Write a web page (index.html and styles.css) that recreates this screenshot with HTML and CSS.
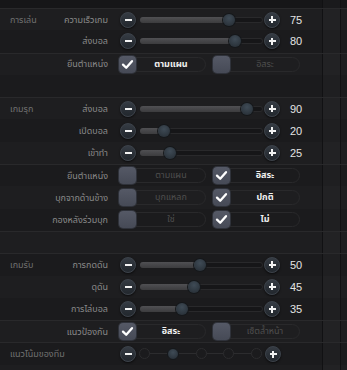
FILE: index.html
```html
<!DOCTYPE html>
<html lang="th">

<head>
    <meta charset="UTF-8">
    <meta name="viewport" content="width=device-width, initial-scale=1.0">
    <title>Tactics</title>
    <link rel="stylesheet" href="styles.css">
</head>

<body>
    <div class="panel">
        <div class="row top"><div class="main"></div><div class="side"></div><div class="edge"></div></div>

        <!-- การเล่น -->
        <div class="row line">
            <div class="main">
                <div class="head"><span class="sec">การเล่น</span><span class="name">ความเร็วเกม</span></div>
                <span class="btn"></span>
                <div class="track"><div class="fill" style="width:75%"></div></div>
                <span class="btn plus"></span>
                <span class="val">75</span>
            </div><div class="side"></div><div class="edge"></div>
        </div>
        <div class="row alt">
            <div class="main">
                <div class="head"><span class="sec"></span><span class="name">ส่งบอล</span></div>
                <span class="btn"></span>
                <div class="track"><div class="fill" style="width:80%"></div></div>
                <span class="btn plus"></span>
                <span class="val">80</span>
            </div><div class="side"></div><div class="edge"></div>
        </div>
        <div class="row line">
            <div class="main">
                <div class="head"><span class="sec"></span><span class="name">ยืนตำแหน่ง</span></div>
                <div class="opt on"><span class="box"></span><span class="pill">ตามแผน</span></div>
                <div class="opt"><span class="box"></span><span class="pill">อิสระ</span></div>
            </div><div class="side"></div><div class="edge"></div>
        </div>
        <div class="row alt"><div class="main"></div><div class="side"></div><div class="edge"></div></div>

        <!-- เกมรุก -->
        <div class="row line">
            <div class="main">
                <div class="head"><span class="sec">เกมรุก</span><span class="name">ส่งบอล</span></div>
                <span class="btn"></span>
                <div class="track"><div class="fill" style="width:90%"></div></div>
                <span class="btn plus"></span>
                <span class="val">90</span>
            </div><div class="side"></div><div class="edge"></div>
        </div>
        <div class="row alt">
            <div class="main">
                <div class="head"><span class="sec"></span><span class="name">เปิดบอล</span></div>
                <span class="btn"></span>
                <div class="track"><div class="fill" style="width:20%"></div></div>
                <span class="btn plus"></span>
                <span class="val">20</span>
            </div><div class="side"></div><div class="edge"></div>
        </div>
        <div class="row">
            <div class="main">
                <div class="head"><span class="sec"></span><span class="name">เข้าทำ</span></div>
                <span class="btn"></span>
                <div class="track"><div class="fill" style="width:25%"></div></div>
                <span class="btn plus"></span>
                <span class="val">25</span>
            </div><div class="side"></div><div class="edge"></div>
        </div>
        <div class="row line alt">
            <div class="main">
                <div class="head"><span class="sec"></span><span class="name">ยืนตำแหน่ง</span></div>
                <div class="opt"><span class="box"></span><span class="pill">ตามแผน</span></div>
                <div class="opt on"><span class="box"></span><span class="pill">อิสระ</span></div>
            </div><div class="side"></div><div class="edge"></div>
        </div>
        <div class="row">
            <div class="main">
                <div class="head"><span class="sec"></span><span class="name">บุกจากด้านข้าง</span></div>
                <div class="opt"><span class="box"></span><span class="pill">บุกแหลก</span></div>
                <div class="opt on"><span class="box"></span><span class="pill">ปกติ</span></div>
            </div><div class="side"></div><div class="edge"></div>
        </div>
        <div class="row alt">
            <div class="main">
                <div class="head"><span class="sec"></span><span class="name">กองหลังร่วมบุก</span></div>
                <div class="opt"><span class="box"></span><span class="pill">ใช่</span></div>
                <div class="opt on"><span class="box"></span><span class="pill">ไม่</span></div>
            </div><div class="side"></div><div class="edge"></div>
        </div>
        <div class="row line"><div class="main"></div><div class="side"></div><div class="edge"></div></div>

        <!-- เกมรับ -->
        <div class="row line alt">
            <div class="main">
                <div class="head"><span class="sec">เกมรับ</span><span class="name">การกดดัน</span></div>
                <span class="btn"></span>
                <div class="track"><div class="fill" style="width:50%"></div></div>
                <span class="btn plus"></span>
                <span class="val">50</span>
            </div><div class="side"></div><div class="edge"></div>
        </div>
        <div class="row">
            <div class="main">
                <div class="head"><span class="sec"></span><span class="name">ดุดัน</span></div>
                <span class="btn"></span>
                <div class="track"><div class="fill" style="width:45%"></div></div>
                <span class="btn plus"></span>
                <span class="val">45</span>
            </div><div class="side"></div><div class="edge"></div>
        </div>
        <div class="row alt">
            <div class="main">
                <div class="head"><span class="sec"></span><span class="name">การไล่บอล</span></div>
                <span class="btn"></span>
                <div class="track"><div class="fill" style="width:35%"></div></div>
                <span class="btn plus"></span>
                <span class="val">35</span>
            </div><div class="side"></div><div class="edge"></div>
        </div>
        <div class="row line">
            <div class="main">
                <div class="head"><span class="sec"></span><span class="name">แนวป้องกัน</span></div>
                <div class="opt on"><span class="box"></span><span class="pill">อิสระ</span></div>
                <div class="opt"><span class="box"></span><span class="pill">เซ็ตล้ำหน้า</span></div>
            </div><div class="side"></div><div class="edge"></div>
        </div>

        <!-- แนวโน้มของทีม -->
        <div class="row line alt">
            <div class="main">
                <div class="head"><span class="sec">แนวโน้มของทีม</span><span class="name"></span></div>
                <span class="btn"></span>
                <div class="steps">
                    <span class="dot"></span>
                    <span class="dot cur"></span>
                    <span class="dot"></span>
                    <span class="dot"></span>
                    <span class="dot"></span>
                </div>
                <span class="btn plus step-plus"></span>
            </div><div class="side"></div><div class="edge"></div>
        </div>
        <div class="row"><div class="main"></div><div class="side"></div><div class="edge"></div></div>
    </div>
</body>

</html>
```

FILE: styles.css
```css
body {
    margin: 0;
    background-color: #1c1c1e;
    font-family: 'Noto Sans Thai', 'Liberation Sans', sans-serif;
    font-size: 9px;
    color: #7c7c7c;
}

.panel {
    width: 347px;
    height: 370px;
    overflow: hidden;
}

.row {
    display: grid;
    grid-template-columns: 323px 18px 1fr;
    height: 22.3px;
    background-color: #1e1e20;
    box-sizing: border-box;
}

.row.alt {
    background-color: #1b1b1d;
}

.row.line {
    border-top: 1px solid #29292b;
}

.row.top {
    height: 8px;
    background-color: #161618;
}

.main {
    display: flex;
    align-items: center;
    border-right: 1px solid #111113;
}

.side {
    border-right: 1px solid #111113;
    background-color: rgba(255, 255, 255, 0.02);
}

.head {
    width: 108px;
    display: flex;
    justify-content: space-between;
    white-space: nowrap;
    flex-shrink: 0;
}

.sec {
    padding-left: 10px;
    color: #717171;
}

.name {
    color: #8a8a8a;
}

/* minus / plus buttons */
.btn {
    position: relative;
    width: 14px;
    height: 14px;
    margin-left: 12px;
    flex-shrink: 0;
    border-radius: 50%;
    background: linear-gradient(#353b43, #22272d);
    border: 1px solid #3c424a;
    box-shadow: 0 1px 2px rgba(0, 0, 0, 0.6);
}

.btn::before,
.plus::after {
    content: '';
    position: absolute;
    left: 3.5px;
    top: 6px;
    width: 7px;
    height: 2px;
    background-color: #f2f2f2;
}

.plus::after {
    left: 6px;
    top: 3.5px;
    width: 2px;
    height: 7px;
}

.plus {
    margin-left: 1px;
}

.track {
    width: 123px;
    height: 6px;
    margin-left: 4px;
    padding-right: 4px;
    box-sizing: border-box;
    border-radius: 3px;
    background-color: #161618;
    box-shadow: inset 0 0 0 1px #29292b;
    flex-shrink: 0;
}

.fill {
    position: relative;
    height: 6px;
    border-radius: 3px 0 0 3px;
    background: linear-gradient(#505053, #3c3c3e);
}

.fill::after {
    content: '';
    position: absolute;
    right: -6px;
    top: -3px;
    width: 12px;
    height: 12px;
    border-radius: 50%;
    background: radial-gradient(circle at 50% 35%, #3f4b56, #242b32);
    box-shadow: 0 0 0 1px #15181b;
}

.val {
    margin-left: 10px;
    color: #e4e4e4;
    font-family: 'Liberation Sans', Arial, sans-serif;
    font-size: 11px;
}

/* checkbox options */
.opt {
    display: flex;
    align-items: center;
    width: 87px;
    margin-left: 11px;
    flex-shrink: 0;
}

.opt + .opt {
    margin-left: 7px;
}

.box {
    position: relative;
    z-index: 1;
    width: 17px;
    height: 17px;
    border-radius: 4px;
    background: linear-gradient(#555966, #464a56);
    box-shadow: 0 0 0 1px #2f323a;
    flex-shrink: 0;
}

.on .box::after {
    content: '';
    position: absolute;
    inset: 0;
    background: url("data:image/svg+xml,%3Csvg xmlns='http://www.w3.org/2000/svg' viewBox='0 0 17 17'%3E%3Cpolyline points='4,8.6 7.2,11.8 13,5.2' fill='none' stroke='%23fff' stroke-width='2.3' stroke-linecap='round' stroke-linejoin='round'/%3E%3C/svg%3E") no-repeat center;
}

.pill {
    flex: 1;
    height: 15px;
    margin-left: -9px;
    padding-left: 9px;
    line-height: 13px;
    text-align: center;
    border: 1px solid #29292b;
    border-radius: 8px;
    box-sizing: border-box;
    color: #4e4e4e;
}

.on .pill {
    color: #f0f0f0;
    font-weight: bold;
}

/* stepped slider */
.steps {
    position: relative;
    display: flex;
    justify-content: space-between;
    width: 123px;
    margin-left: 3px;
    flex-shrink: 0;
}

.steps::before {
    content: '';
    position: absolute;
    left: 5px;
    right: 5px;
    top: 5px;
    height: 1px;
    background-color: #2c2c2e;
}

.dot {
    position: relative;
    width: 11px;
    height: 11px;
    border-radius: 50%;
    box-sizing: border-box;
    border: 1px solid #2c2c2e;
    background-color: #1b1b1d;
}

.dot.cur {
    width: 12px;
    height: 12px;
    margin-top: -0.5px;
    border-color: #15181b;
    background: radial-gradient(circle at 50% 35%, #3f4b56, #242b32);
}

.step-plus {
    margin-left: 3px;
}
```
